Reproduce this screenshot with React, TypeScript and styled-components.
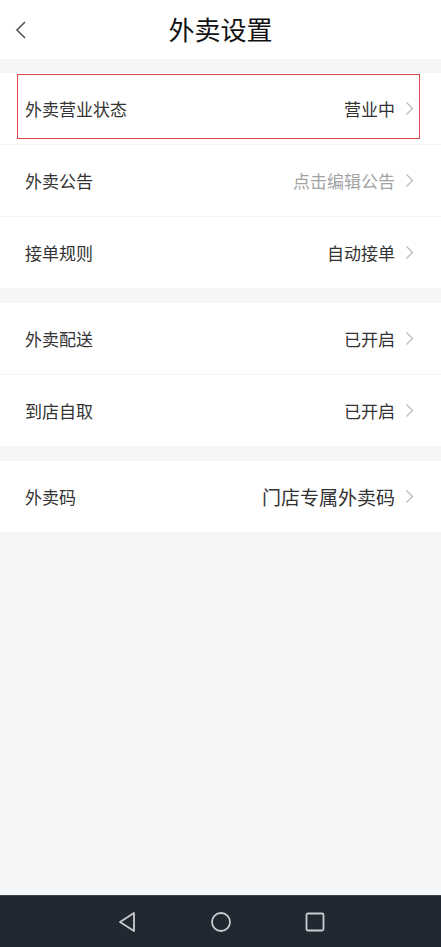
import styled, { createGlobalStyle } from "styled-components";

const GlobalStyle = createGlobalStyle`
    html, body {
        margin: 0;
        padding: 0;
        background-color: #f5f6f8;
        font-family: "Noto Sans CJK SC", "Noto Sans", sans-serif;
    }
`;

const Page = styled.div`
    display: flex;
    flex-direction: column;
    width: 441px;
    height: 947px;
    background-color: #f5f6f8;
    overflow: hidden;
`;

const Header = styled.header`
    display: grid;
    grid-template-columns: 60px 1fr 60px;
    align-items: center;
    height: 59px;
    background-color: #ffffff;
`;

const BackButton = styled.div`
    display: flex;
    align-items: center;
    padding-left: 14px;
    cursor: pointer;
`;

const Title = styled.h1`
    margin: 0 0 2px;
    text-align: center;
    font-size: 26px;
    font-weight: 400;
    color: #111111;
    line-height: 1;
`;

const Content = styled.main`
    display: flex;
    flex-direction: column;
    flex: 1;
    padding-top: 14px;
    gap: 15px;
`;

const Group = styled.section`
    display: flex;
    flex-direction: column;
    background-color: #ffffff;
`;

const Row = styled.div<{ $last?: boolean }>`
    position: relative;
    display: flex;
    align-items: center;
    justify-content: space-between;
    height: 71px;
    padding: 0 27px 0 25px;
    border-bottom: ${p => (p.$last ? "none" : "1px solid #f6f6f6")};
    cursor: pointer;
`;

const Label = styled.span`
    font-size: 17px;
    color: #333333;
`;

const ValueBox = styled.div`
    display: flex;
    align-items: center;
    gap: 10px;
`;

const Value = styled.span<{ $muted?: boolean; $large?: boolean }>`
    font-size: ${p => (p.$large ? "19px" : "17px")};
    color: ${p => (p.$muted ? "#a3a3a3" : "#333333")};
`;

const Highlight = styled.div`
    position: absolute;
    top: 1px;
    left: 17px;
    right: 21px;
    height: 63px;
    border: 1.5px solid #e2474a;
    pointer-events: none;
`;

const NavBar = styled.nav`
    display: flex;
    align-items: center;
    justify-content: center;
    gap: 70px;
    height: 51px;
    background-color: #222831;
    border-top: 1px solid #3a404a;
`;

const NavIcon = styled.div`
    display: flex;
    align-items: center;
    justify-content: center;
    width: 24px;
    height: 24px;
`;

const Chevron = () => (
    <svg width="9" height="15" viewBox="0 0 9 15">
        <polyline points="1.5,1.5 7.5,7.5 1.5,13.5" fill="none" stroke="#bdbdbd" strokeWidth="1.4" />
    </svg>
);

interface SettingItem {
    label: string;
    value: string;
    muted?: boolean;
    large?: boolean;
    highlight?: boolean;
}

const groups: SettingItem[][] = [
    [
        { label: "外卖营业状态", value: "营业中", highlight: true },
        { label: "外卖公告", value: "点击编辑公告", muted: true },
        { label: "接单规则", value: "自动接单" },
    ],
    [
        { label: "外卖配送", value: "已开启" },
        { label: "到店自取", value: "已开启" },
    ],
    [{ label: "外卖码", value: "门店专属外卖码", large: true }],
];

const App = () => {
    return (
        <Page>
            <GlobalStyle />
            <Header>
                <BackButton title="返回">
                    <svg width="14" height="20" viewBox="0 0 14 20">
                        <polyline points="11,2 3,10 11,18" fill="none" stroke="#555555" strokeWidth="1.6" />
                    </svg>
                </BackButton>
                <Title>外卖设置</Title>
                <div />
            </Header>
            <Content>
                {groups.map((group, gi) => (
                    <Group key={gi}>
                        {group.map((item, i) => (
                            <Row key={item.label} $last={i === group.length - 1}>
                                <Label>{item.label}</Label>
                                <ValueBox>
                                    <Value $muted={item.muted} $large={item.large}>
                                        {item.value}
                                    </Value>
                                    <Chevron />
                                </ValueBox>
                                {item.highlight ? <Highlight /> : null}
                            </Row>
                        ))}
                    </Group>
                ))}
            </Content>
            <NavBar>
                <NavIcon>
                    <svg width="18" height="22" viewBox="0 0 18 22">
                        <polygon points="16,2 16,20 2,11" fill="none" stroke="#c9ccd1" strokeWidth="1.8" strokeLinejoin="round" />
                    </svg>
                </NavIcon>
                <NavIcon>
                    <svg width="22" height="22" viewBox="0 0 22 22">
                        <circle cx="11" cy="11" r="9" fill="none" stroke="#c9ccd1" strokeWidth="1.8" />
                    </svg>
                </NavIcon>
                <NavIcon>
                    <svg width="20" height="20" viewBox="0 0 20 20">
                        <rect x="1.5" y="1.5" width="17" height="17" rx="1.5" fill="none" stroke="#c9ccd1" strokeWidth="1.8" />
                    </svg>
                </NavIcon>
            </NavBar>
        </Page>
    );
};

export default App;
